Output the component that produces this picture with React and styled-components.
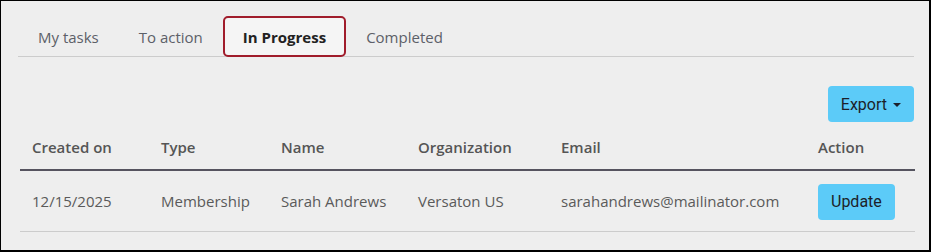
import React from 'react';
import styled, { createGlobalStyle } from 'styled-components';

const GlobalStyle = createGlobalStyle`
  html, body {
    margin: 0;
    padding: 0;
    background: #eeeeee;
  }
  * {
    box-sizing: border-box;
  }
`;

const Frame = styled.div`
  width: 931px;
  height: 252px;
  background: #eeeeee;
  border-style: solid;
  border-color: #000;
  border-width: 1px 2px 2px 1px;
  padding: 15px 15px 0 19px;
  font-family: 'Open Sans', 'Noto Sans', sans-serif;
  font-size: 15px;
  color: #555;
  overflow: hidden;
`;

const Tabs = styled.div`
  display: flex;
  border-bottom: 1px solid #cccccc;
  margin-left: -2px;
  height: 41px;
`;

const Tab = styled.div`
  height: 41px;
  padding: 0 18px;
  display: flex;
  align-items: center;
  border: 2px solid ${(p) => (p.$active ? '#a01c2b' : 'transparent')};
  border-radius: 5px;
  background: ${(p) => (p.$active ? '#f5f5f5' : 'transparent')};
  color: ${(p) => (p.$active ? '#222' : '#5c6068')};
  font-weight: ${(p) => (p.$active ? 700 : 400)};
  line-height: 20px;
  position: relative;
  z-index: 1;
  margin-bottom: -1px;
`;

const Toolbar = styled.div`
  display: flex;
  justify-content: flex-end;
  padding-top: 29px;
`;

const BlueButton = styled.button`
  font-family: Roboto, 'Liberation Sans', sans-serif;
  font-size: 16px;
  color: #1c1f2a;
  background: #5ccbf8;
  border: none;
  border-radius: 4px;
  height: 36px;
  padding: 0 13px;
  display: inline-flex;
  align-items: center;
  gap: 6px;
  cursor: pointer;
`;

const Caret = styled.span`
  display: inline-block;
  width: 0;
  height: 0;
  border-left: 4px solid transparent;
  border-right: 4px solid transparent;
  border-top: 4px solid #1c1f2a;
  margin-top: 2px;
`;

const Table = styled.table`
  width: 895px;
  border-collapse: collapse;
  table-layout: fixed;
`;

const Th = styled.th`
  text-align: left;
  font-weight: 600;
  color: #555;
  padding: 15px 12px 12px;
  line-height: 20px;
  border-bottom: 2px solid #55535f;
`;

const Td = styled.td`
  text-align: left;
  color: #5a5a5a;
  padding: 12px 12px 11px;
  line-height: 36px;
  border-bottom: 1px solid #cccccc;
  white-space: nowrap;
`;

const columns = [
  { label: 'Created on', width: 129 },
  { label: 'Type', width: 120 },
  { label: 'Name', width: 137 },
  { label: 'Organization', width: 143 },
  { label: 'Email', width: 257 },
  { label: 'Action', width: 109 },
];

const rows = [
  {
    created: '12/15/2025',
    type: 'Membership',
    name: 'Sarah Andrews',
    org: 'Versaton US',
    email: 'sarahandrews@mailinator.com',
  },
];

export default function App() {
  const tabs = ['My tasks', 'To action', 'In Progress', 'Completed'];

  return (
    <>
      <GlobalStyle />
      <Frame>
        <Tabs>
          {tabs.map((t) => (
            <Tab key={t} $active={t === 'In Progress'}>
              {t}
            </Tab>
          ))}
        </Tabs>
        <Toolbar>
          <BlueButton>
            Export <Caret />
          </BlueButton>
        </Toolbar>
        <Table>
          <colgroup>
            {columns.map((c) => (
              <col key={c.label} style={{ width: c.width }} />
            ))}
          </colgroup>
          <thead>
            <tr>
              {columns.map((c) => (
                <Th key={c.label}>{c.label}</Th>
              ))}
            </tr>
          </thead>
          <tbody>
            {rows.map((r) => (
              <tr key={r.email}>
                <Td>{r.created}</Td>
                <Td>{r.type}</Td>
                <Td>{r.name}</Td>
                <Td>{r.org}</Td>
                <Td>{r.email}</Td>
                <Td>
                  <BlueButton>Update</BlueButton>
                </Td>
              </tr>
            ))}
          </tbody>
        </Table>
      </Frame>
    </>
  );
}
